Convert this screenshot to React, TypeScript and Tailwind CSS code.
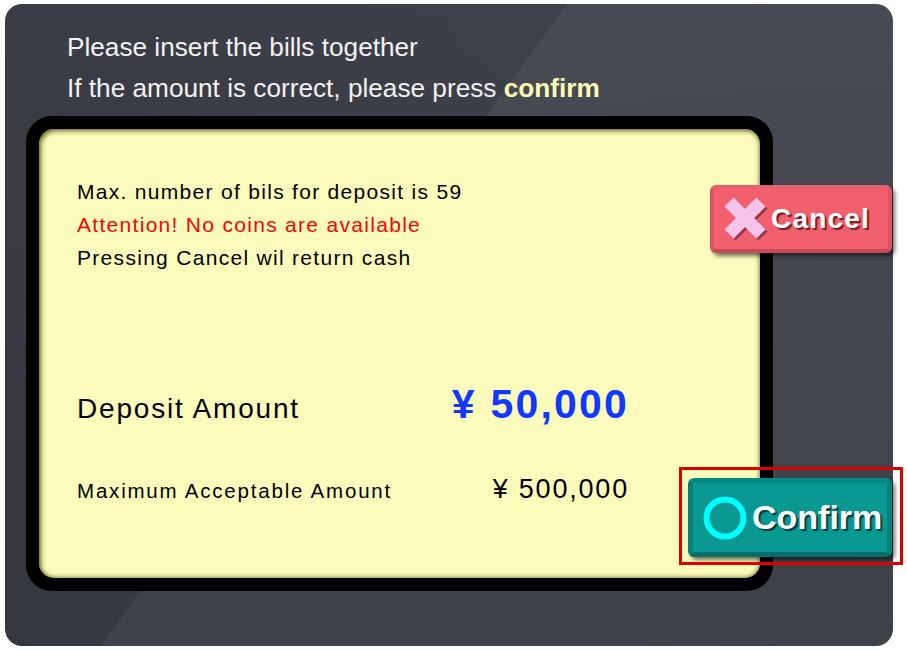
import React from "react";

function CrossIcon() {
  return (
    <svg width="46" height="46" viewBox="0 0 46 46" className="shrink-0">
      <g stroke="#6e2f3c" strokeWidth="13" opacity="0.75">
        <line x1="8" y1="8" x2="40" y2="40" />
        <line x1="40" y1="8" x2="8" y2="40" />
      </g>
      <g stroke="#f8c3ea" strokeWidth="13">
        <line x1="6" y1="6" x2="38" y2="38" />
        <line x1="38" y1="6" x2="6" y2="38" />
      </g>
    </svg>
  );
}

function RingIcon() {
  return (
    <svg width="44" height="44" viewBox="0 0 44 44" className="shrink-0">
      <circle cx="22" cy="22" r="18.5" fill="none" stroke="#00ffff" strokeWidth="6" />
    </svg>
  );
}

export default function App() {
  return (
    <div className="h-[650px] w-[907px] bg-white pl-[5px] pt-[4px] font-['Liberation_Sans',Arial,sans-serif]">
      <div className="h-[642px] w-[888px] rounded-[17px] bg-[linear-gradient(180deg,rgba(255,255,255,0.03),rgba(0,0,0,0.05)),linear-gradient(126deg,#34363f_0%,#383a44_41.5%,#43454e_41.5%,#42444d_100%)]">
        {/* Header */}
        <div className="pl-[62px] pt-[23px] text-[26.2px] leading-[41px] text-[#f2f2f2]">
          <p>Please insert the bills together</p>
          <p>
            If the amount is correct, please press{" "}
            <span className="font-bold text-[#fbfbb4]">confirm</span>
          </p>
        </div>

        <div className="mt-[7px] flex">
          {/* Display box */}
          <div className="ml-[21px] h-[475px] w-[747px] shrink-0 rounded-[26px] bg-black p-[13px]">
            <div className="h-full rounded-[15px] bg-[#fbfcbb] pl-[38px] pr-[131px] pt-[46px] text-black shadow-[inset_2px_2px_5px_rgba(70,70,0,0.75),inset_-1px_-1px_4px_rgba(70,70,0,0.5)]">
              <div className="text-[21px] leading-[33px] tracking-[1.3px]">
                <p>Max. number of bils for deposit is 59</p>
                <p className="text-[#ff0000]">Attention! No coins are available</p>
                <p>Pressing Cancel wil return cash</p>
              </div>

              <div className="mt-[106px] flex items-baseline justify-between">
                <span className="text-[28px] leading-[48px] tracking-[1.8px]">Deposit Amount</span>
                <span className="text-[41px] font-bold leading-[48px] tracking-[2.2px] text-[#1238ff]">
                  ¥ 50,000
                </span>
              </div>

              <div className="mt-[41px] flex items-baseline justify-between">
                <span className="text-[20.5px] leading-[30px] tracking-[1.8px]">Maximum Acceptable Amount</span>
                <span className="text-[27px] leading-[30px] tracking-[1.8px]">¥ 500,000</span>
              </div>
            </div>
          </div>

          {/* Buttons */}
          <div className="relative z-10 -ml-[85px] flex w-[204px] flex-col items-end pt-[69px]">
            <button className="flex h-[68px] w-[182px] items-center gap-[2px] rounded-[6px] border-[4px] border-b-[#c64a5a] border-l-[#d85565] border-r-[#d85565] border-t-[#e4616f] bg-[#f2606e] pl-[9px] shadow-[3px_3px_4px_rgba(0,0,0,0.55)]">
              <CrossIcon />
              <span className="text-[28px] font-bold tracking-[1.2px] text-white [text-shadow:2px_2px_1px_rgba(60,0,10,0.7)]">
                Cancel
              </span>
            </button>

            <div className="relative mt-[225px]">
              <button className="flex h-[79px] w-[204px] items-center gap-[5px] rounded-[6px] border-[5px] border-b-[#066f6b] border-l-[#077f7a] border-r-[#077f7a] border-t-[#088a85] bg-[#0a9892] pl-[10px] shadow-[3px_3px_4px_rgba(0,0,0,0.55)]">
                <RingIcon />
                <span className="text-[34px] font-bold text-white [text-shadow:2px_2px_1px_rgba(0,30,30,0.75)]">
                  Confirm
                </span>
              </button>
              <div className="pointer-events-none absolute -bottom-[8px] -left-[9px] -right-[11px] -top-[11px] border-[3px] border-[#dd0000]" />
            </div>
          </div>
        </div>
      </div>
    </div>
  );
}
